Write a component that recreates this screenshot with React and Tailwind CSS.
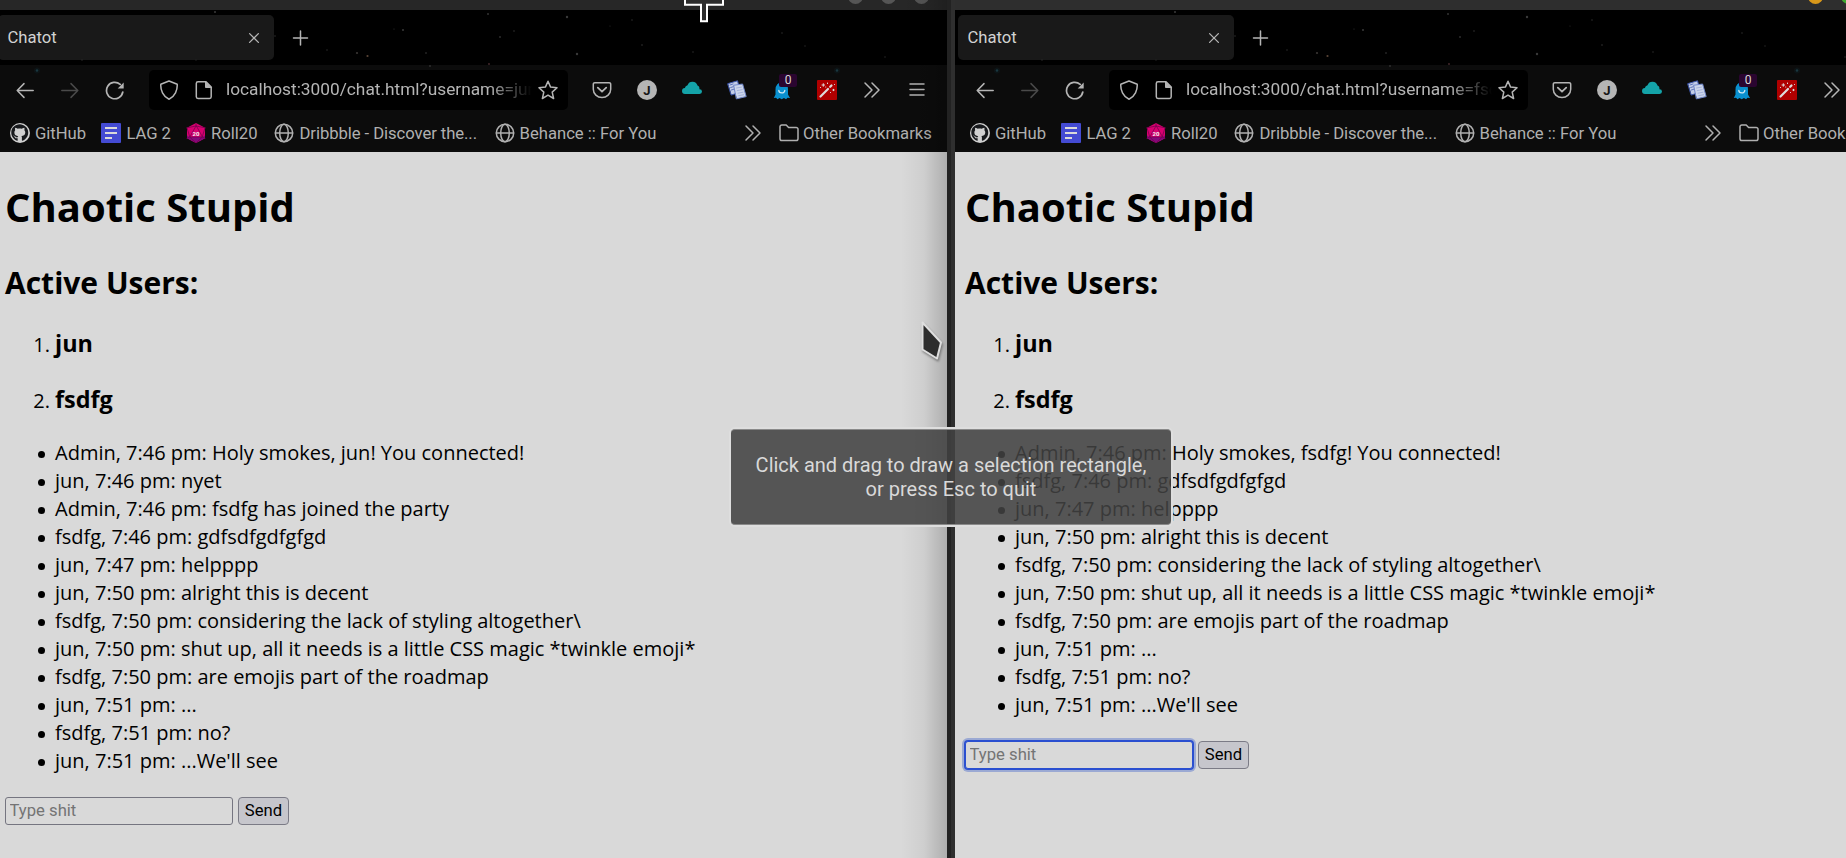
import React from "react";
import { FaGithub } from "react-icons/fa";

const STARS = [
  [220, 12, 1, "#3a3a3a"], [408, 30, 1, "#3a3a3a"], [399, 29, 0.6, "#333"], [362, 53, 1.1, "#3a3634"], [372.5, 56, 1.1, "#5a4436"],
  [431, 53, 0.8, "#3c3c3c"], [435, 66, 0.9, "#333"], [332, 50, 0.7, "#333"], [280, 36, 0.8, "#2c2c2c"], [494, 64, 0.9, "#4a2c30"],
  [87, 60, 0.8, "#2a2a2a"], [201, 60, 0.8, "#242424"], [493, 14, 1, "#333"], [572, 17, 1.2, "#3a3a3a"], [505, 37, 1, "#2c2c2c"],
  [519, 31, 0.8, "#303030"], [582, 54, 1.2, "#3a3a3a"], [637, 20, 0.8, "#2c2c2c"], [647, 45, 0.8, "#333"], [698, 52, 0.8, "#2a2a2a"],
  [787, 33, 0.8, "#2a2a2a"], [810, 46, 0.7, "#2a2a2a"], [890, 57, 0.8, "#262626"], [615, 26, 0.6, "#2a2a2a"],
];

function Icon({ w = 20, h = w, box = "0 0 20 20", className = "", children }) {
  return (
    <svg width={w} height={h} viewBox={box} fill="none" stroke="currentColor" strokeWidth="1.5" strokeLinecap="round" strokeLinejoin="round" className={`shrink-0 ${className}`}>
      {children}
    </svg>
  );
}

const Globe = () => (
  <Icon>
    <circle cx="10" cy="10" r="8.7" />
    <ellipse cx="10" cy="10" rx="4.3" ry="8.7" />
    <path d="M1.5 10h17" />
  </Icon>
);

const Chevrons = () => (
  <Icon>
    <path d="M3 3l7 7-7 7M10 3l7 7-7 7" />
  </Icon>
);

const Cell = ({ children }) => <div className="flex w-[45px] shrink-0 items-center justify-center">{children}</div>;

function TabStrip() {
  return (
    <div className="flex h-[55px] items-center bg-black pl-[3px]">
      <div className="flex h-[45px] w-[276px] items-center justify-between rounded-[5px] bg-[#191919] pr-[10px] pl-[9.500px] text-[#d2d2d2]">
        <span>Chatot</span>
        <Icon className="text-[#b5b5b5]">
          <path d="M5.6 5.6l8.8 8.8M14.4 5.6l-8.8 8.8" strokeWidth="1.3" />
        </Icon>
      </div>
      <Icon className="ml-[16px] text-[#b5b5b5]">
        <path d="M10.500 3v14M3.500 10h14" />
      </Icon>
    </div>
  );
}

function Toolbar({ url }) {
  return (
    <div className="flex h-[50px] items-center bg-[#0c0c0c] pl-[7.500px] text-[#b5b5b5]">
      <Cell>
        <Icon><path d="M18.2 10.5H2.2M9 3.6L2.2 10.5 9 17.4" /></Icon>
      </Cell>
      <Cell>
        <Icon className="text-[#4a4a4a]"><path d="M1.8 10.5h16M11 3.6l6.800 6.900L11 17.400" /></Icon>
      </Cell>
      <Cell>
        <Icon>
          <path d="M17.800 12a8.200 8.200 0 1 1-2.600-7.600" strokeWidth="1.700" />
          <path d="M18.700 2.400v6h-6z" fill="currentColor" stroke="none" />
        </Icon>
      </Cell>
      <div className="ml-[11.500px] flex h-[40px] w-[419px] shrink-0 items-center rounded-[5px] bg-black pl-[10px]">
        <Icon>
          <path d="M10 1L18.200 4.200C18.600 10 16 16.500 10 19.200C4 16.500 1.400 10 1.800 4.200Z" />
        </Icon>
        <Icon className="ml-[15px]">
          <path d="M4 1.700h8L17.200 7v9.800a1.700 1.700 0 0 1-1.700 1.700H4a1.700 1.700 0 0 1-1.700-1.700V3.400A1.700 1.700 0 0 1 4 1.700z" />
          <path d="M11.500 1.700V7.500h5.700z" fill="currentColor" strokeWidth="1" />
        </Icon>
        <div className="ml-[12px] w-[306px] overflow-hidden text-[17.300px] whitespace-nowrap [mask-image:linear-gradient(to_right,black_262px,transparent_306px)]">{url}</div>
        <Icon className="ml-[6px]">
          <path d="M10 1.200l2.600 5.900 6.400.7-4.800 4.300 1.400 6.400L10 15.200l-5.600 3.300 1.400-6.400L1 7.800l6.400-.7z" />
        </Icon>
      </div>
      <div className="flex items-center pl-[11.500px]">
        <Cell>
          <Icon>
            <path d="M2.800 2.700h14.400a1.500 1.500 0 0 1 1.500 1.500v5.100a8.700 8.200 0 0 1-17.400 0V4.200a1.500 1.500 0 0 1 1.500-1.500z" />
            <path d="M5.800 7.700l4.200 4 4.200-4" strokeWidth="1.800" />
          </Icon>
        </Cell>
        <Cell>
          <div className="flex size-[20px] items-center justify-center rounded-full bg-[#b5b5b5] text-[13px] leading-none font-bold text-[#161616]">J</div>
        </Cell>
        <Cell>
          <Icon>
            <path d="M3 14A3 3 0 0 1 0 11a3 3 0 0 1 2.900-3A3.500 3.500 0 0 1 5.500 5.200 5.300 5.300 0 0 1 15.500 5.600a3 3 0 0 1 1.800 3.600A2.500 2.500 0 0 1 20 11.600 2.400 2.400 0 0 1 17.600 14z" fill="#14a3a8" stroke="none" />
          </Icon>
        </Cell>
        <Cell>
          <Icon>
            <path d="M1 3.600L10.500 .8l3 11.200-9 3z" fill="#c3cde6" stroke="#3c56ad" strokeWidth="1" />
            <path d="M3 5l3-1M3.700 7.500l2.600-.8M4.300 10l2.500-.8" stroke="#5d74bc" strokeWidth="1" />
            <path d="M7 5.200l8.600-1.200 3.600 12.600-9.500 2.200z" fill="#ccd5ea" stroke="#6f86c8" strokeWidth="1" />
            <path d="M9.500 8l5-.9M10.200 10.600l5-1M11 13.200l5-1M11.700 15.700l5-1" stroke="#9aa9d6" strokeWidth=".8" />
          </Icon>
        </Cell>
        <Cell>
          <div className="relative flex">
            <Icon>
              <path d="M3.500 14.500V9.500a6 7 0 0 1 12.500 0V14.500l2 3.500-2.500-.3-1.500 1.500-2-1.200-2.300 1.300-2.200-1.300-2 1.200-1.500-1.500L1.800 18z" fill="#0a90cf" stroke="none" />
              <path d="M6.800 10.300a3 2.600 0 0 0 6 0" stroke="#cfe9f5" strokeWidth="1.300" />
            </Icon>
            <span className="absolute -top-[6px] left-[7px] flex h-[13px] w-[18px] items-center justify-center rounded-[2px] bg-[#2a0530] pb-[2px] text-[12px] leading-none text-[#d9d9d9]">0</span>
          </div>
        </Cell>
        <Cell>
          <Icon>
            <rect width="20" height="20" rx="1" fill="#b00000" stroke="none" />
            <path d="M3.500 16.500L11 9" stroke="#ddd" strokeWidth="2.200" />
            <path d="M13.200 6.800l1.300-1.300" stroke="#ddd" strokeWidth="2.200" />
            <path d="M6.300 3.700v2.600M5 5h2.600M10.500 3v.6M16.500 9.300v1.400M15.800 10h1.400M13.500 12.500v.1M8.700 7v.1M17.500 4.500v.1M3.500 7.500v.1" stroke="#ddd" strokeWidth="1" />
          </Icon>
        </Cell>
        <Cell><Chevrons /></Cell>
        <Cell>
          <Icon><path d="M3 4h14M3 9.500h14M3 15h14" /></Icon>
        </Cell>
      </div>
    </div>
  );
}

function Bookmarks() {
  return (
    <div className="flex h-[37px] items-center bg-[#0c0c0c] pb-px pl-[15px] text-[#b0b0b0]">
      <div className="flex w-[91px] shrink-0 items-center gap-[5px] tracking-[-0.050px]">
        <span className="flex size-[20px] shrink-0 items-center justify-center rounded-full bg-[#d0d0d0] text-[17.500px] text-[#17191c]"><FaGithub /></span>
        GitHub
      </div>
      <div className="flex w-[85px] shrink-0 items-center gap-[5.500px] tracking-[-0.1px]">
        <Icon>
          <rect width="20" height="20" rx="1" fill="#444bd3" stroke="none" />
          <path d="M4 5h12M4 10h12M4 15h7" stroke="#d9d9d9" strokeWidth="2" strokeLinecap="butt" />
        </Icon>
        LAG 2
      </div>
      <div className="flex w-[88px] shrink-0 items-center gap-[5px]">
        <Icon>
          <path d="M10 0l9 4.800v10.400L10 20l-9-4.800V4.800z" fill="#d8006f" stroke="none" />
          <path d="M1 12.500l2.800 1.500h12.400l2.800-1.500v2.700L10 20l-9-4.800z" fill="#85087a" stroke="none" />
          <path d="M10 3L3.800 14h12.400zM10 0v3M1 4.800l9-1.800 9 1.800M1 4.800L3.800 14 10 20l6.200-6L19 4.800M1 15.200L3.800 14M19 15.200L16.200 14" stroke="#7a0050" strokeWidth=".8" />
          <text x="10" y="12.500" textAnchor="middle" fontSize="6" fontWeight="bold" fill="#eee" stroke="none">20</text>
        </Icon>
        Roll20
      </div>
      <div className="flex w-[221px] shrink-0 items-center gap-[5.500px] tracking-[-0.070px] whitespace-nowrap"><Globe />Dribbble - Discover the...</div>
      <div className="flex w-[248px] shrink-0 items-center gap-[4.500px] whitespace-nowrap"><Globe />Behance :: For You</div>
      <div className="flex w-[36px] shrink-0"><Chevrons /></div>
      <div className="flex shrink-0 items-center gap-[4px] whitespace-nowrap">
        <Icon>
          <path d="M1 3.800A1.800 1.800 0 0 1 2.800 2h4.400l2.400 2.500h7.600A1.800 1.800 0 0 1 19 6.300v9.400a1.800 1.800 0 0 1-1.800 1.800H2.800A1.800 1.800 0 0 1 1 15.700z" />
        </Icon>
        Other Bookmarks
      </div>
    </div>
  );
}

function ChatPage({ messages, focused }) {
  return (
    <div className="flex-1 bg-[#d9d9d9] pl-[10px] font-['Open_Sans',sans-serif] text-[20px] leading-[28px] text-black">
      <h1 className="pt-[27px] text-[40px] leading-[56px] font-bold">Chaotic Stupid</h1>
      <h2 className="mt-[27px] text-[30px] leading-[42px] font-bold">Active Users:</h2>
      <ol className="mt-[22px]">
        {["jun", "fsdfg"].map((name, i) => (
          <li key={name} className="flex h-[56px] items-baseline leading-[34px]">
            <span className="w-[50px] pr-[5px] text-right">{i + 1}.</span>
            <span className="text-[23.400px] font-bold">{name}</span>
          </li>
        ))}
      </ol>
      <ul className="mt-px">
        {messages.map((m) => (
          <li key={m} className="flex h-[28px] items-center">
            <span className="mt-[3px] mr-[10px] ml-[33px] size-[7px] rounded-full bg-black" />
            {m}
          </li>
        ))}
      </ul>
      <div className="mt-[22px] flex gap-[5px] font-[Roboto,sans-serif] text-[16.670px]">
        <input
          placeholder="Type shit"
          className={`h-[28px] w-[228px] rounded-[3px] border bg-[#d9d9d9] px-[3.500px] pb-[2px] leading-[24px] outline-none placeholder:text-[#747474] ${focused ? "border-[#2a4fd0] shadow-[0_0_0_1px_#2a4fd0,0_0_0_3px_#9ba9d3]" : "border-[#757580]"}`}
        />
        <button className="flex h-[28px] w-[51px] items-center justify-center rounded-[4px] border border-[#7b7b86] bg-[#c6c6cc] leading-none">Send</button>
      </div>
    </div>
  );
}

function BrowserWindow({ url, messages, active }) {
  const controls = active ? ["#d9981a", "#3fa82e", "#c04030"] : ["#555", "#555", "#555"];
  return (
    <div className="relative flex h-[858px] w-[952px] shrink-0 flex-col font-[Roboto,sans-serif] text-[16.670px]">
      <div className={`h-[10px] shrink-0 overflow-hidden pl-[853px] ${active ? "bg-[#2e2e2e]" : "bg-[#272727]"}`}>
        <div className="-mt-[11px] flex gap-[18px]">
          {controls.map((c, i) => (
            <span key={i} className="size-[15px] shrink-0 rounded-full" style={{ backgroundColor: c }} />
          ))}
        </div>
      </div>
      <TabStrip />
      <Toolbar url={url} />
      <Bookmarks />
      <svg width="952" height="152" className="pointer-events-none absolute top-0 left-0">
        {STARS.map(([x, y, r, c]) => <circle key={x} cx={x} cy={y} r={r} fill={c} />)}
        {[42, 842].map((x) => (
          <g key={x}>
            <circle cx={x} cy="70.500" r="3" fill="#10242b" opacity=".35" />
            <circle cx={x} cy="70.500" r="1.200" fill="#193740" />
          </g>
        ))}
      </svg>
      <ChatPage messages={messages} focused={active} />
    </div>
  );
}

const SHARED = [
  "jun, 7:50 pm: alright this is decent",
  "fsdfg, 7:50 pm: considering the lack of styling altogether\\",
  "jun, 7:50 pm: shut up, all it needs is a little CSS magic *twinkle emoji*",
  "fsdfg, 7:50 pm: are emojis part of the roadmap",
  "jun, 7:51 pm: ...",
  "fsdfg, 7:51 pm: no?",
  "jun, 7:51 pm: ...We'll see",
];

const JUN = [
  "Admin, 7:46 pm: Holy smokes, jun! You connected!",
  "jun, 7:46 pm: nyet",
  "Admin, 7:46 pm: fsdfg has joined the party",
  "fsdfg, 7:46 pm: gdfsdfgdfgfgd",
  "jun, 7:47 pm: helpppp",
  ...SHARED,
];

const FSDFG = [
  "Admin, 7:46 pm: Holy smokes, fsdfg! You connected!",
  "fsdfg, 7:46 pm: gdfsdfgdfgfgd",
  "jun, 7:47 pm: helpppp",
  ...SHARED,
];

export default function App() {
  return (
    <div className="relative flex h-[858px] w-[1846px] overflow-hidden bg-black">
      <div className="relative flex w-[947px] shrink-0 justify-end overflow-hidden">
        <BrowserWindow url="localhost:3000/chat.html?username=jun" messages={JUN} />
        <div className="absolute top-0 right-0 h-full w-[46px] bg-linear-to-r from-transparent via-black/5 to-black/20" />
      </div>
      <div className="w-[4px] shrink-0 bg-[#222222]" />
      <div className="w-[4px] shrink-0 bg-[#2f2f2f]" />
      <div className="flex flex-1 overflow-hidden">
        <BrowserWindow url="localhost:3000/chat.html?username=fsdfg" messages={FSDFG} active />
      </div>

      <svg width="46" height="26" className="absolute top-0 left-[681px]">
        <path d="M4 -6V4.700H20V21.300H26V4.700H42V-6" fill="#2d2d2d" stroke="#fff" strokeWidth="2" />
      </svg>
      <svg width="30" height="46" className="absolute top-[318px] left-[918px] drop-shadow-[1px_2px_1px_rgba(0,0,0,0.35)]">
        <path d="M4.500 4.500V31.500L19 40.500L23 24.500Z" fill="#2d2d2d" stroke="#dedede" strokeWidth="2" strokeLinejoin="round" />
      </svg>
      <div className="absolute top-[429px] left-[731px] flex h-[96px] w-[440px] items-center justify-center rounded-[4px] border-y border-[#8a8a8a] bg-[#414141]/87 text-center font-[Roboto,sans-serif] text-[20px] leading-[24px] text-[#d9d9d9] shadow-[0_0_0_2px_#dedede]">
        <p>Click and drag to draw a selection rectangle,<br />or press Esc to quit</p>
      </div>
    </div>
  );
}
